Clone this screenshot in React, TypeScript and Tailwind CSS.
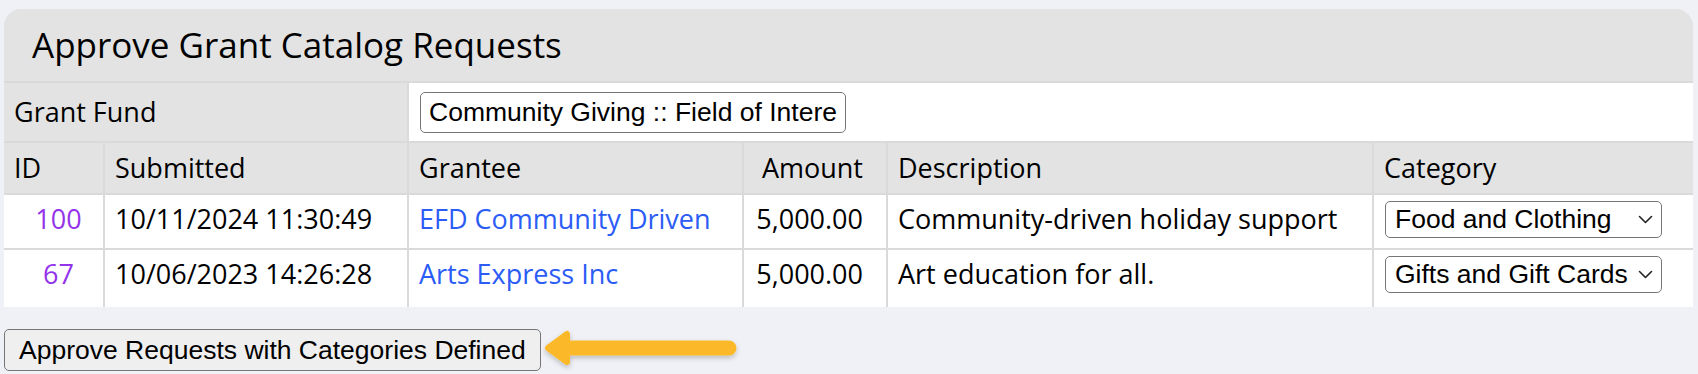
import React from "react";

type Request = {
  id: string;
  submitted: string;
  grantee: string;
  amount: string;
  description: string;
  category: string;
};

const requests: Request[] = [
  {
    id: "100",
    submitted: "10/11/2024 11:30:49",
    grantee: "EFD Community Driven",
    amount: "5,000.00",
    description: "Community-driven holiday support",
    category: "Food and Clothing",
  },
  {
    id: "67",
    submitted: "10/06/2023 14:26:28",
    grantee: "Arts Express Inc",
    amount: "5,000.00",
    description: "Art education for all.",
    category: "Gifts and Gift Cards",
  },
];

const sans = "font-['Open_Sans',sans-serif]";
const arial = "font-['Liberation_Sans',Arial,sans-serif]";

function Chevron() {
  return (
    <svg width="15" height="9" viewBox="0 0 15 9" className="shrink-0">
      <polyline
        points="1.5,1.5 7.5,7.5 13.5,1.5"
        fill="none"
        stroke="#222"
        strokeWidth="1.6"
        strokeLinecap="round"
        strokeLinejoin="round"
      />
    </svg>
  );
}

function CategorySelect({ value }: { value: string }) {
  return (
    <div
      className={`${arial} flex h-[37px] w-[277px] items-center justify-between rounded-[5px] border-[1.5px] border-[#767676] bg-white pl-[9px] pr-[8px] text-[26.5px] text-black`}
    >
      <span className="whitespace-nowrap leading-none">{value}</span>
      <Chevron />
    </div>
  );
}

function Arrow() {
  return (
    <svg width="200" height="44" viewBox="0 0 200 44" className="ml-[2px]">
      <defs>
        <filter id="arrowShadow" x="-10%" y="-40%" width="120%" height="190%">
          <feDropShadow dx="0" dy="2.5" stdDeviation="2.5" floodColor="#000" floodOpacity="0.22" />
        </filter>
      </defs>
      <g filter="url(#arrowShadow)" fill="#fbb92c" stroke="#fbb92c" strokeLinecap="round" strokeLinejoin="round">
        <line x1="20" y1="20" x2="186" y2="20" strokeWidth="15" />
        <polygon points="5,20 24,6 24,34" strokeWidth="6" />
      </g>
    </svg>
  );
}

export default function App() {
  const cell = "flex items-center bg-white pl-[10px]";
  const head = "flex items-center bg-[#e3e3e3] pl-[10px]";

  return (
    <div className={`${sans} min-h-[374px] bg-[#f0f1f6] pl-[4px] pr-[5px] pt-[9px] text-black`}>
      <div className="overflow-hidden rounded-t-[18px]">
        <div className="grid grid-cols-[99px_302px_333px_142px_484px_1fr] gap-[2px] bg-[#dadada] text-[27px]">
          <div className="col-span-6 flex h-[72px] items-center bg-[#e3e3e3] pl-[28px] text-[35px]">
            Approve Grant Catalog Requests
          </div>

          <div className={`${head} col-span-2 h-[58px]`}>Grant Fund</div>
          <div className="col-span-4 flex h-[58px] items-center bg-white pl-[11px]">
            <div
              className={`${arial} flex h-[41px] w-[426px] items-center overflow-hidden whitespace-nowrap rounded-[5px] border-[1.5px] border-[#767676] bg-white pl-[8px] text-[26.5px] leading-none`}
            >
              Community Giving :: Field of Intere
            </div>
          </div>

          <div className={`${head} h-[50px]`}>ID</div>
          <div className={`${head} h-[50px]`}>Submitted</div>
          <div className={`${head} h-[50px]`}>Grantee</div>
          <div className={`${head} h-[50px] justify-end pr-[23px]`}>Amount</div>
          <div className={`${head} h-[50px]`}>Description</div>
          <div className={`${head} h-[50px]`}>Category</div>

          {requests.map((r, i) => {
            const h = i === 0 ? "h-[53px] pb-[5px]" : "h-[57px] pb-[8px]";
            return (
              <React.Fragment key={r.id}>
                <div className={`${cell} ${h} justify-center pl-0 text-[#9333ea]`}>{r.id}</div>
                <div className={`${cell} ${h}`}>{r.submitted}</div>
                <div className={`${cell} ${h} text-[#2b5cf6]`}>{r.grantee}</div>
                <div className={`${cell} ${h} justify-end pr-[23px]`}>{r.amount}</div>
                <div className={`${cell} ${h}`}>{r.description}</div>
                <div className={`${cell} ${h} pl-[11px]`}>
                  <CategorySelect value={r.category} />
                </div>
              </React.Fragment>
            );
          })}
        </div>
      </div>

      <div className="mt-[21px] flex items-center">
        <button
          className={`${arial} h-[42px] rounded-[5px] border-[1.5px] border-[#767676] bg-[#efefef] px-[14px] text-[26.5px] leading-none text-black`}
        >
          Approve Requests with Categories Defined
        </button>
        <Arrow />
      </div>
    </div>
  );
}
